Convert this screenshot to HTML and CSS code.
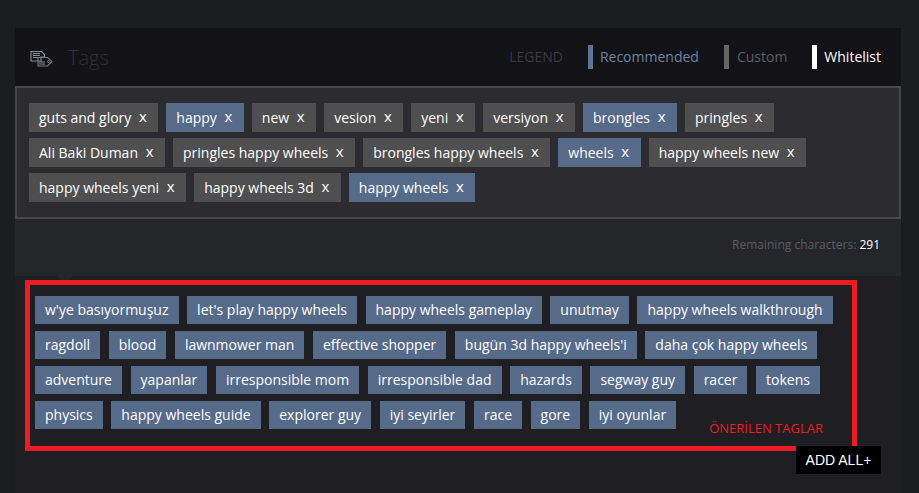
FILE: index.html
```html
<!DOCTYPE html>
<html lang="en">
<head>
  <meta charset="UTF-8" />
  <meta name="viewport" content="width=device-width, initial-scale=1.0"/>
  <title>Tags</title>
  <link rel="stylesheet" href="styles.css">
</head>
<body>
  <div class="page">
    <section class="panel">
      <header class="panel-header">
        <div class="panel-title">
          <svg class="tags-icon" width="24" height="18" viewBox="0 0 24 18" fill="none">
            <path d="M1 1.5h10.5l3 3v2.5h-3.5v4H1z" stroke="#8b8e95" stroke-width="1.1"/>
            <path d="M3 3.5h7M3 5.5h7M3 7.5h5" stroke="#8b8e95" stroke-width="1.1"/>
            <path d="M8 7.5h9.5l4.5 4-4.5 4.5H8z" stroke="#6f7f95" stroke-width="1.1"/>
            <path d="M9 12h6M9 14h6" stroke="#8b8e95" stroke-width="1.1"/>
            <circle cx="18.5" cy="11.5" r="1" stroke="#8b8e95" stroke-width="0.8"/>
          </svg>
          <h1>Tags</h1>
        </div>
        <div class="legend">
          <span class="legend-label">LEGEND</span>
          <span class="legend-item legend-recommended">Recommended</span>
          <span class="legend-item legend-custom">Custom</span>
          <span class="legend-item legend-whitelist">Whitelist</span>
        </div>
      </header>

      <div class="tag-box">
        <span class="tag">guts and glory <i>x</i></span>
        <span class="tag tag-blue">happy <i>x</i></span>
        <span class="tag">new <i>x</i></span>
        <span class="tag">vesion <i>x</i></span>
        <span class="tag">yeni <i>x</i></span>
        <span class="tag">versiyon <i>x</i></span>
        <span class="tag tag-blue">brongles <i>x</i></span>
        <span class="tag">pringles <i>x</i></span>
        <span class="tag">Ali Baki Duman <i>x</i></span>
        <span class="tag">pringles happy wheels <i>x</i></span>
        <span class="tag">brongles happy wheels <i>x</i></span>
        <span class="tag tag-blue">wheels <i>x</i></span>
        <span class="tag">happy wheels new <i>x</i></span>
        <span class="tag">happy wheels yeni <i>x</i></span>
        <span class="tag">happy wheels 3d <i>x</i></span>
        <span class="tag tag-blue">happy wheels <i>x</i></span>
      </div>

      <div class="remaining">Remaining characters: <b>291</b></div>

      <div class="suggest">
        <div class="suggest-box">
          <span class="tag tag-blue">w'ye basıyormuşuz</span>
          <span class="tag tag-blue">let's play happy wheels</span>
          <span class="tag tag-blue">happy wheels gameplay</span>
          <span class="tag tag-blue">unutmay</span>
          <span class="tag tag-blue">happy wheels walkthrough</span>
          <span class="tag tag-blue">ragdoll</span>
          <span class="tag tag-blue">blood</span>
          <span class="tag tag-blue">lawnmower man</span>
          <span class="tag tag-blue">effective shopper</span>
          <span class="tag tag-blue">bugün 3d happy wheels'i</span>
          <span class="tag tag-blue">daha çok happy wheels</span>
          <span class="tag tag-blue">adventure</span>
          <span class="tag tag-blue">yapanlar</span>
          <span class="tag tag-blue">irresponsible mom</span>
          <span class="tag tag-blue">irresponsible dad</span>
          <span class="tag tag-blue">hazards</span>
          <span class="tag tag-blue">segway guy</span>
          <span class="tag tag-blue">racer</span>
          <span class="tag tag-blue">tokens</span>
          <span class="tag tag-blue">physics</span>
          <span class="tag tag-blue">happy wheels guide</span>
          <span class="tag tag-blue">explorer guy</span>
          <span class="tag tag-blue">iyi seyirler</span>
          <span class="tag tag-blue">race</span>
          <span class="tag tag-blue">gore</span>
          <span class="tag tag-blue">iyi oyunlar</span>
          <span class="suggest-note">ÖNERİLEN TAGLAR</span>
        </div>
        <button class="add-all">ADD ALL+</button>
      </div>
    </section>
  </div>
</body>
</html>
```

FILE: styles.css
```css
/* General Reset */
* {
    margin: 0;
    padding: 0;
    box-sizing: border-box;
}
html, body {
    height: 100%;
    overflow: hidden;
}
body {
    font-family: 'Open Sans', sans-serif;
    background-color: #1c1d21;
    color: #fff;
}
.page {
    padding: 28px 18px 0 15px;
    height: 493px;
}
.panel {
    height: 465px;
    background: #1e1e23;
}
.panel-header {
    display: flex;
    align-items: center;
    justify-content: space-between;
    height: 58px;
    padding: 0 20px 0 15px;
    background: #121217;
}
.panel-title {
    display: flex;
    align-items: center;
    gap: 14px;
}
.tags-icon {
    margin-top: 4px;
}
.panel-title h1 {
    font-size: 20px;
    font-weight: 300;
    color: #303136;
}
.legend {
    display: flex;
    align-items: center;
    font-size: 14px;
    line-height: 22px;
}
.legend-label {
    color: #3a3b40;
    margin-right: 25px;
}
.legend-item {
    display: flex;
    align-items: center;
    height: 24px;
    padding-left: 8px;
    margin-right: 25px;
    border-left: 5px solid;
}
.legend-recommended {
    padding-left: 7px;
    color: #6f84a3;
    border-color: #5f7597;
}
.legend-custom {
    color: #5f5f5f;
    border-color: #666;
}
.legend-whitelist {
    padding-left: 7px;
    color: #fff;
    border-color: #fff;
    margin-right: 0;
}
.tag-box {
    display: flex;
    flex-wrap: wrap;
    align-content: flex-start;
    gap: 6px 8px;
    height: 133px;
    padding: 15px 12px;
    background: #2b2b30;
    border: 2px solid #47484b;
}
.tag {
    display: inline-block;
    height: 29px;
    line-height: 29px;
    padding: 0 10px;
    font-size: 14px;
    color: #fff;
    background: #4f4f4f;
    white-space: nowrap;
}
.tag-box .tag {
    padding-right: 11.5px;
}
.tag i {
    font-style: normal;
    font-size: 15px;
    margin-left: 4px;
    position: relative;
    top: -1px;
}
.tag-blue {
    background: #566a89;
}
.remaining {
    height: 57px;
    padding: 17px 21px 0 0;
    font-size: 12px;
    text-align: right;
    color: #5c5d60;
    background: #25262a;
}
.remaining b {
    font-weight: 400;
    color: #fff;
}
.suggest {
    position: relative;
    padding: 4px 44px 0 10px;
}
/* little arrow under the remaining bar */
.suggest::before {
    content: "";
    position: absolute;
    left: 42px;
    top: 0;
    width: 16px;
    height: 4px;
    background: #25262a;
    clip-path: polygon(0 0, 100% 0, 75% 100%, 25% 100%);
}
.suggest-box {
    position: relative;
    display: flex;
    flex-wrap: wrap;
    align-content: flex-start;
    gap: 7px 8.6px;
    height: 171px;
    padding: 11px 5px;
    border: 5px solid #ed1c24;
}
.suggest-box .tag {
    height: 28px;
    line-height: 28px;
}
.suggest-note {
    position: absolute;
    right: 29px;
    bottom: 9px;
    font-size: 13px;
    color: #ed1c24;
}
.add-all {
    position: absolute;
    right: 20px;
    top: 170px;
    width: 85px;
    height: 28px;
    border: none;
    background: #000;
    color: #fff;
    font-family: 'Liberation Sans', sans-serif;
    font-size: 14px;
}
```
